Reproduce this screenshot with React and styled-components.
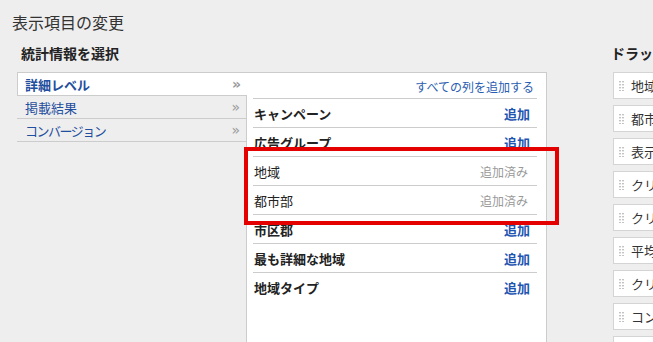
import React from "react";
import styled, { createGlobalStyle } from "styled-components";

const GlobalStyle = createGlobalStyle`
  html, body {
    margin: 0;
    padding: 0;
    background: #eeeeee;
    overflow: hidden;
  }
  body {
    font-family: "Noto Sans CJK JP", "Liberation Sans", sans-serif;
    color: #333333;
  }
`;

const Page = styled.div`
  position: relative;
  width: 653px;
  height: 342px;
  padding: 12px 0 0 12px;
  box-sizing: border-box;
`;

const Title = styled.h1`
  margin: 0;
  font-size: 16px;
  line-height: 20px;
  font-weight: 400;
  color: #333333;
`;

const Columns = styled.div`
  display: flex;
  align-items: flex-start;
  margin-top: 11px;
  padding-left: 5px;
`;

const LeftCol = styled.div`
  width: 530px;
  flex-shrink: 0;
`;

const RightCol = styled.div`
  margin-left: 64px;
  flex-shrink: 0;
`;

const SectionHeading = styled.h2`
  margin: 0 0 9px;
  padding-left: ${p => p.$indent || 0}px;
  font-size: 14px;
  line-height: 20px;
  font-weight: 700;
  color: #222222;
  white-space: nowrap;
`;

const Picker = styled.div`
  display: flex;
  align-items: flex-start;
`;

const Tabs = styled.div`
  width: 229px;
  border-top: 1px solid #cccccc;
  position: relative;
  z-index: 1;
`;

const Tab = styled.div`
  display: flex;
  align-items: center;
  justify-content: space-between;
  height: 22px;
  padding: 0 6px 0 ${p => (p.$active ? 7 : 8)}px;
  border-bottom: 1px solid #cccccc;
  border-left: ${p => (p.$active ? "1px solid #cccccc" : "0")};
  background: ${p => (p.$active ? "#ffffff" : "transparent")};
  margin-right: ${p => (p.$active ? "-1px" : "0")};
  font-size: 13px;
  font-weight: ${p => (p.$active ? 700 : 400)};
  color: #1f4f9e;
  letter-spacing: ${p => p.$tight || 0}px;
`;

const Chevron = styled.span`
  font-family: "DejaVu Sans", sans-serif;
  font-size: 14px;
  letter-spacing: 0;
  color: #9a9a9a;
`;

const Panel = styled.div`
  width: 301px;
  height: 290px;
  box-sizing: border-box;
  border: 1px solid #cccccc;
  background: #ffffff;
`;

const PanelHeader = styled.div`
  height: 25px;
  box-sizing: border-box;
  padding: 3px 12px 0 0;
  text-align: right;
  font-size: 12px;
  line-height: 22px;
  color: #2a5db0;
`;

const Rows = styled.div`
  margin: 0 9px 0 6px;
`;

const Row = styled.div`
  display: flex;
  align-items: center;
  justify-content: space-between;
  height: 28px;
  border-top: 1px solid #cccccc;
  padding: 0 7px 0 1px;
  font-size: 13px;
  font-weight: ${p => (p.$added ? 400 : 700)};
  color: #222222;
`;

const Action = styled.span`
  font-size: ${p => (p.$added ? 12 : 13)}px;
  font-weight: ${p => (p.$added ? 400 : 700)};
  color: ${p => (p.$added ? "#999999" : "#1f55b0")};
  padding-right: ${p => (p.$added ? 2 : 0)}px;
`;

const ColumnList = styled.div`
  display: flex;
  flex-direction: column;
  gap: 6px;
  margin-left: 2px;
  margin-top: 5px;
`;

const ColumnItem = styled.div`
  display: flex;
  align-items: center;
  gap: 7px;
  width: 200px;
  height: 25px;
  padding-left: 5px;
  border: 1px solid #d4d4d4;
  background: #ffffff;
  font-size: 13px;
  color: #333333;
  white-space: nowrap;
`;

const Highlight = styled.div`
  position: absolute;
  left: 244px;
  top: 147px;
  width: 315px;
  height: 78px;
  box-sizing: border-box;
  border: 4px solid #e50000;
  pointer-events: none;
`;

const Grip = () => (
  <svg width="5" height="10" viewBox="0 0 5 10">
    {[0, 3, 6, 9].map(y =>
      [0, 3].map(x => (
        <rect key={`${x}-${y}`} x={x} y={y} width="2" height="1.4" fill="#c4c4c4" />
      ))
    )}
  </svg>
);

const tabs = [
  { label: "詳細レベル", active: true },
  { label: "掲載結果" },
  { label: "コンバージョン", tight: -1.5 },
];

const rows = [
  { label: "キャンペーン" },
  { label: "広告グループ" },
  { label: "地域", added: true },
  { label: "都市部", added: true },
  { label: "市区郡" },
  { label: "最も詳細な地域" },
  { label: "地域タイプ" },
];

const columns = [
  "地域",
  "都市部",
  "表示回数",
  "クリック数",
  "クリック率",
  "平均クリック単価",
  "クリック単価",
  "コンバージョン",
  "コスト",
];

const App = () => {
  return (
    <>
      <GlobalStyle />
      <Page>
        <Title>表示項目の変更</Title>
        <Columns>
          <LeftCol>
            <SectionHeading $indent={4}>統計情報を選択</SectionHeading>
            <Picker>
              <Tabs>
                {tabs.map(t => (
                  <Tab key={t.label} $active={t.active} $tight={t.tight}>
                    <span>{t.label}</span>
                    <Chevron>»</Chevron>
                  </Tab>
                ))}
              </Tabs>
              <Panel>
                <PanelHeader>すべての列を追加する</PanelHeader>
                <Rows>
                  {rows.map(r => (
                    <Row key={r.label} $added={r.added}>
                      <span>{r.label}</span>
                      <Action $added={r.added}>{r.added ? "追加済み" : "追加"}</Action>
                    </Row>
                  ))}
                </Rows>
              </Panel>
            </Picker>
          </LeftCol>
          <RightCol>
            <SectionHeading>ドラッグ＆ドロップで列を並べ替え</SectionHeading>
            <ColumnList>
              {columns.map(c => (
                <ColumnItem key={c}>
                  <Grip />
                  <span>{c}</span>
                </ColumnItem>
              ))}
            </ColumnList>
          </RightCol>
        </Columns>
        <Highlight />
      </Page>
    </>
  );
};

export default App;
